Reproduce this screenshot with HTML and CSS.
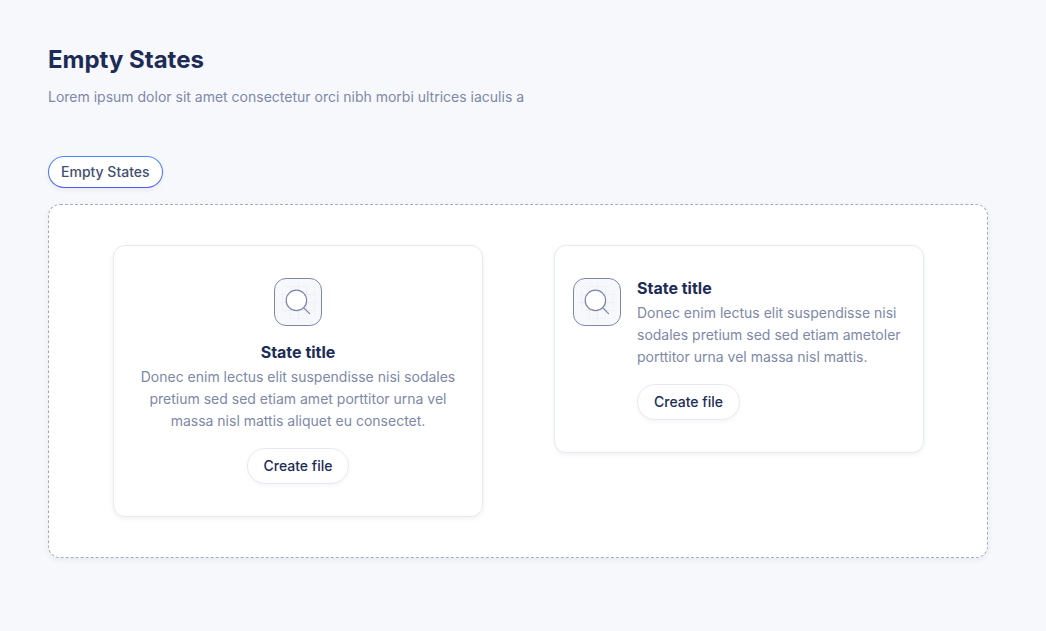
FILE: index.html
```
<!DOCTYPE html>
<html lang="en">
<head>
<meta charset="utf-8">
<meta name="viewport" content="width=device-width, initial-scale=1">
<title>Empty States</title>
<link rel="stylesheet" href="styles.css">
</head>
<body>
<svg class="defs" width="0" height="0" aria-hidden="true">
  <defs>
    <radialGradient id="grid-fade" cx="24" cy="24" r="22" gradientUnits="userSpaceOnUse">
      <stop offset="0" stop-color="#e9ebf4"/>
      <stop offset="0.6" stop-color="#eceef6"/>
      <stop offset="1" stop-color="#f7f8fc"/>
    </radialGradient>
    <symbol id="search-tile" viewBox="0 0 48 48">
      <rect x="0.5" y="0.5" width="47" height="47" rx="11.5" fill="#f7f8fc" stroke="#7c88a8"/>
      <path d="M8.5 8v32M16.5 4v40M24.5 4v40M32.5 4v40M40.5 8v32M8 8.5h32M4 16.5h40M4 24.5h40M4 32.5h40M8 40.5h32" fill="none" stroke="url(#grid-fade)"/>
      <circle cx="22.4" cy="22.4" r="10.2" fill="#fff" stroke="#7c86a8" stroke-width="1.2"/>
      <path d="M29.6 29.6L35.6 35.6" fill="none" stroke="#7c86a8" stroke-width="1.3" stroke-linecap="round"/>
    </symbol>
  </defs>
</svg>
<main class="page">
  <header class="page-header">
    <h1 class="page-title">Empty States</h1>
    <p class="text">Lorem ipsum dolor sit amet consectetur orci nibh morbi ultrices iaculis a</p>
  </header>
  <section class="showcase">
    <h2 class="tag">Empty States</h2>
    <div class="panel">
      <article class="card card-stacked">
        <svg class="tile" aria-hidden="true"><use href="#search-tile"/></svg>
        <div class="card-body">
          <h3 class="card-title">State title</h3>
          <p class="text">Donec enim lectus elit suspendisse nisi sodales pretium sed sed etiam amet porttitor urna vel massa nisl mattis aliquet eu consectet.</p>
          <button class="button" type="button">Create file</button>
        </div>
      </article>
      <article class="card card-inline">
        <svg class="tile" aria-hidden="true"><use href="#search-tile"/></svg>
        <div class="card-body">
          <h3 class="card-title">State title</h3>
          <p class="text">Donec enim lectus elit suspendisse nisi sodales pretium sed sed etiam ametoler porttitor urna vel massa nisl mattis.</p>
          <button class="button" type="button">Create file</button>
        </div>
      </article>
    </div>
  </section>
</main>
</body>
</html>
```
FILE: styles.css
```
* {
  box-sizing: border-box;
}

body {
  margin: 0;
  background: #f7f8fc;
  color: #1d2b57;
  font-family: Inter, "Liberation Sans", sans-serif;
}

h1, h2, h3, p {
  margin: 0;
}

.defs {
  position: absolute;
}

.page {
  padding: 44px 58px 72px 48px;
}

.page-header {
  display: grid;
  gap: 10px;
  margin-bottom: 48px;
}

.page-title {
  font-size: 24px;
  line-height: 32px;
  font-weight: 700;
}

.text {
  color: #7e88a8;
  font-size: 14px;
  line-height: 22px;
}

.showcase {
  display: flex;
  flex-direction: column;
  align-items: flex-start;
  gap: 16px;
}

.tag {
  padding: 5px 12px;
  border: 1px solid transparent;
  border-radius: 16px;
  background: linear-gradient(#fff, #fff) padding-box, linear-gradient(#478bff, #4f5bff) border-box;
  box-shadow: 0 2px 5px rgba(20, 20, 43, 0.06);
  color: #42506f;
  font-size: 14px;
  line-height: 20px;
  font-weight: 500;
}

.panel {
  display: grid;
  grid-template-columns: repeat(auto-fit, minmax(300px, 1fr));
  align-items: start;
  gap: 71px;
  width: 100%;
  padding: 40px 63px 40px 64px;
  border: 1px dashed #a6abc0;
  border-radius: 12px;
  background: #fff;
  box-shadow: 0 2px 6px rgba(20, 20, 43, 0.06);
}

.card {
  display: flex;
  gap: 16px;
  border: 1px solid #e7e9f4;
  border-radius: 12px;
  background: #fff;
  box-shadow: 0 2px 5px rgba(20, 20, 43, 0.06);
}

.card-stacked {
  flex-direction: column;
  align-items: center;
  padding: 32px 24px;
  text-align: center;
}

.card-inline {
  padding: 32px 18px;
}

.tile {
  flex: none;
  width: 48px;
  height: 48px;
}

.card-title {
  margin-bottom: 4px;
  font-size: 16px;
  line-height: 20px;
  font-weight: 700;
}

.button {
  display: inline-block;
  vertical-align: top;
  margin-top: 16px;
  padding: 7px 16px;
  border: 1px solid #e7e9f4;
  border-radius: 18px;
  background: #fff;
  box-shadow: 0 2px 4px rgba(20, 20, 43, 0.04);
  color: #1d2b57;
  font-family: inherit;
  font-size: 14px;
  line-height: 20px;
  font-weight: 500;
}
```
